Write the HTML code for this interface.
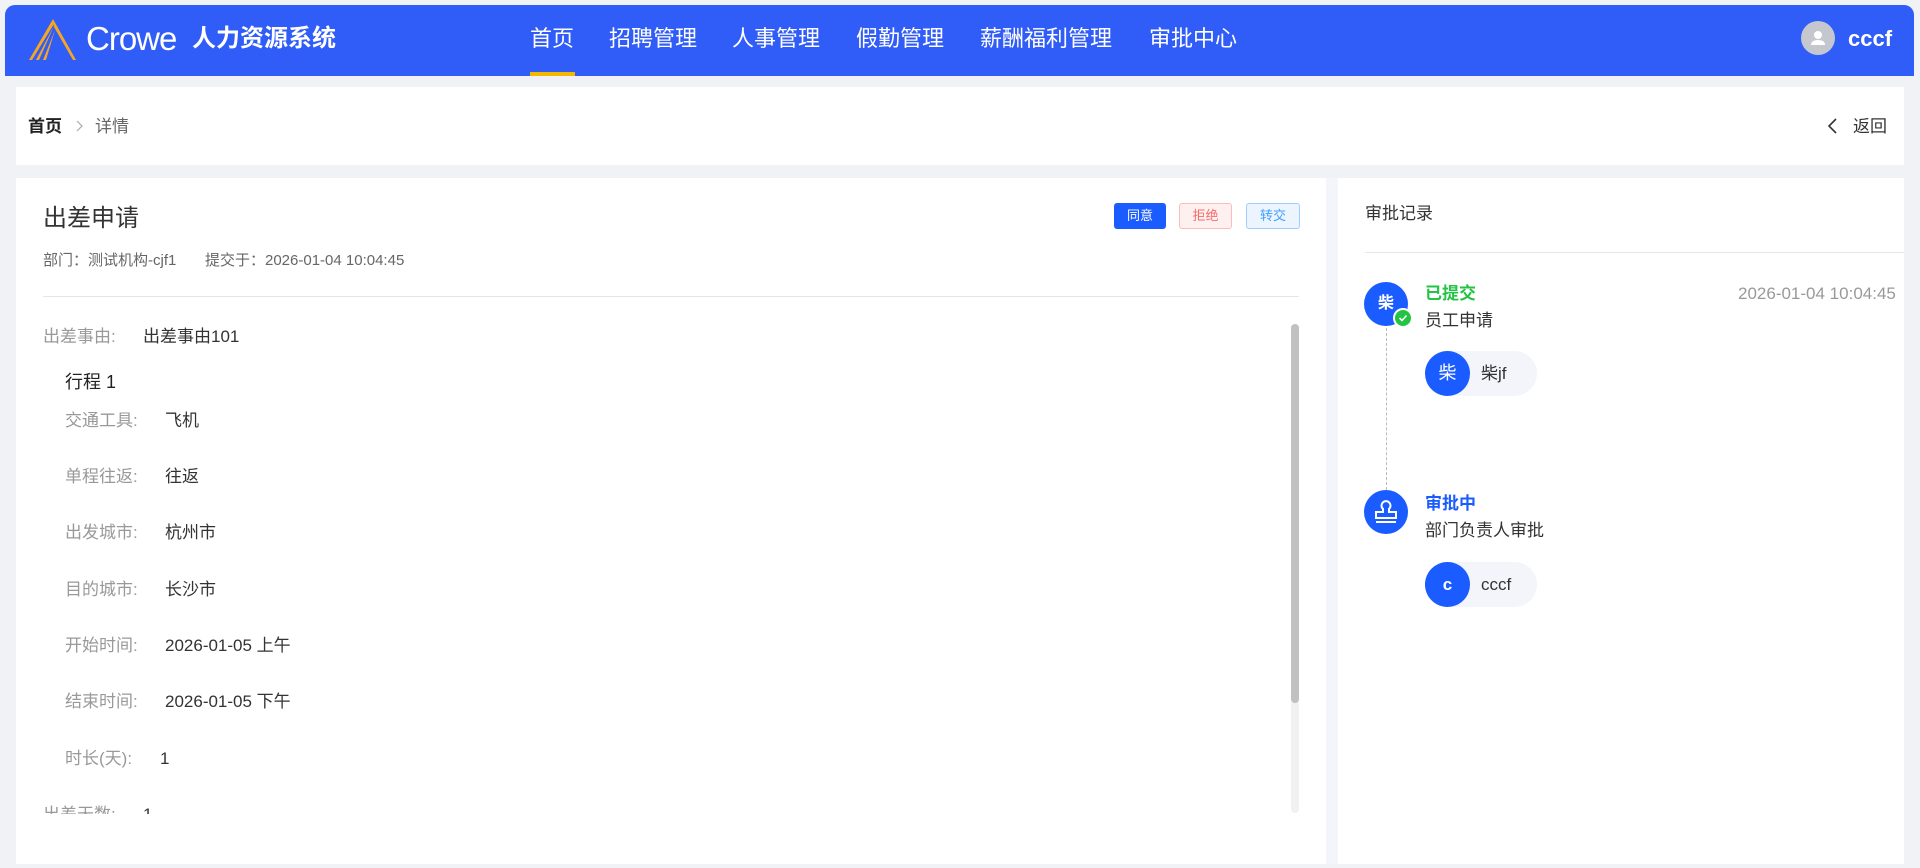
<!DOCTYPE html>
<html><head><meta charset="utf-8"><style>
*{box-sizing:border-box;margin:0;padding:0}
body{width:1920px;height:868px;overflow:hidden;background:#f0f2f5;font-family:"Liberation Sans","Noto Sans CJK SC",sans-serif;color:#333;position:relative}
.a{position:absolute;white-space:nowrap}
.hdr{left:5px;top:5px;width:1909px;height:71px;background:#305cf7;border-radius:10px 10px 0 0}
.nav{color:#fff;font-size:22px;top:23px;line-height:32px}
.card{background:#fff}
.lbl{color:#999;font-size:17px;line-height:20px}
.val{color:#333;font-size:17px;line-height:20px}
.btn{height:26px;font-size:13px;line-height:24px;text-align:center;border-radius:3px;border:1px solid}
.circ{border-radius:50%;background:#1a5cff;color:#fff;text-align:center}
.chip{height:45px;border-radius:23px;background:#f3f5fa}
</style></head><body>
<div class="a hdr"></div>
<svg class="a" style="left:27px;top:17px" width="50" height="46" viewBox="0 0 50 46">
<path d="M26 2 L49 43 L46 43 L27 10 Z" fill="#f5a623"/>
<path d="M26 2 L27 7 L5 43 L2 43 Z" fill="#f5a623"/>
<path d="M27 9 L12 43 L9 43 Z" fill="#f5a623"/>
<path d="M28 13 L19 43 L16 43 Z" fill="#f5a623"/>
</svg>
<div class="a" style="left:86px;top:19px;color:#fff;font-size:33px;line-height:40px;letter-spacing:-1px">Crowe</div>
<div class="a" style="left:192px;top:23px;color:#fff;font-size:24px;font-weight:bold;line-height:32px">人力资源系统</div>
<div class="a nav" style="left:530px">首页</div>
<div class="a" style="left:530px;top:72px;width:45px;height:4px;background:#f5b800"></div>
<div class="a nav" style="left:609px">招聘管理</div>
<div class="a nav" style="left:732px">人事管理</div>
<div class="a nav" style="left:856px">假勤管理</div>
<div class="a nav" style="left:980px">薪酬福利管理</div>
<div class="a nav" style="left:1149px">审批中心</div>
<div class="a" style="left:1801px;top:21px;width:34px;height:34px;border-radius:50%;background:#c4c7ce"></div>
<svg class="a" style="left:1808px;top:28px" width="20" height="20" viewBox="0 0 20 20"><circle cx="10" cy="7" r="4" fill="#fff"/><path d="M3 17 Q3 12 10 12 Q17 12 17 17 Z" fill="#fff"/></svg>
<div class="a" style="left:1848px;top:25px;color:#fff;font-size:22px;font-weight:bold;line-height:28px">cccf</div>

<div class="a card" style="left:16px;top:87px;width:1888px;height:78px"></div>
<div class="a" style="left:28px;top:117px;font-size:17px;font-weight:bold;color:#222;line-height:20px">首页</div>
<svg class="a" style="left:74px;top:119px" width="10" height="14"><path d="M3 2 L8 7 L3 12" stroke="#aaa" fill="none" stroke-width="1.2"/></svg>
<div class="a" style="left:95px;top:117px;font-size:17px;color:#666;line-height:20px">详情</div>
<svg class="a" style="left:1826px;top:117px" width="12" height="18"><path d="M10 2 L3 9 L10 16" stroke="#333" fill="none" stroke-width="1.6"/></svg>
<div class="a" style="left:1853px;top:117px;font-size:17px;color:#333;line-height:20px">返回</div>

<div class="a card" style="left:16px;top:178px;width:1310px;height:686px"></div>
<div class="a" style="left:1326px;top:178px;width:12px;height:686px;background:#f3f5fa"></div>
<div class="a card" style="left:1338px;top:178px;width:566px;height:686px"></div>

<div class="a" style="left:43px;top:204px;font-size:24px;color:#333;line-height:30px">出差申请</div>
<div class="a" style="left:43px;top:252px;font-size:15px;color:#666;line-height:18px">部门：测试机构-cjf1</div>
<div class="a" style="left:205px;top:252px;font-size:15px;color:#666;line-height:18px">提交于：2026-01-04 10:04:45</div>
<div class="a btn" style="left:1114px;top:203px;width:52px;background:#1a5cff;border-color:#1a5cff;color:#fff">同意</div>
<div class="a btn" style="left:1179px;top:203px;width:53px;background:#fff0f0;border-color:#fbb;color:#f56c6c">拒绝</div>
<div class="a btn" style="left:1246px;top:203px;width:54px;background:#ecf5ff;border-color:#a0cfff;color:#409eff">转交</div>
<div class="a" style="left:43px;top:296px;width:1256px;height:1px;background:#e4e6ea"></div>

<div class="a" style="left:16px;top:310px;width:1290px;height:504px;overflow:hidden">
<div class="a lbl" style="left:27px;top:17px">出差事由:</div><div class="a val" style="left:127px;top:17px">出差事由101</div>
<div class="a" style="left:49px;top:61px;font-size:18px;color:#222;line-height:22px">行程 1</div>
<div class="a lbl" style="left:49px;top:101px">交通工具:</div><div class="a val" style="left:149px;top:101px">飞机</div>
<div class="a lbl" style="left:49px;top:157px">单程往返:</div><div class="a val" style="left:149px;top:157px">往返</div>
<div class="a lbl" style="left:49px;top:213px">出发城市:</div><div class="a val" style="left:149px;top:213px">杭州市</div>
<div class="a lbl" style="left:49px;top:270px">目的城市:</div><div class="a val" style="left:149px;top:270px">长沙市</div>
<div class="a lbl" style="left:49px;top:326px">开始时间:</div><div class="a val" style="left:149px;top:326px">2026-01-05 上午</div>
<div class="a lbl" style="left:49px;top:382px">结束时间:</div><div class="a val" style="left:149px;top:382px">2026-01-05 下午</div>
<div class="a lbl" style="left:49px;top:439px">时长(天):</div><div class="a val" style="left:144px;top:439px">1</div>
<div class="a lbl" style="left:27px;top:495px">出差天数:</div><div class="a val" style="left:127px;top:495px">1</div>
</div>
<div class="a" style="left:1291px;top:324px;width:8px;height:489px;background:#f1f1f1;border-radius:4px"></div>
<div class="a" style="left:1291px;top:324px;width:8px;height:379px;background:#c1c1c1;border-radius:4px"></div>

<div class="a" style="left:1365px;top:204px;font-size:17px;color:#333;line-height:20px">审批记录</div>
<div class="a" style="left:1365px;top:252px;width:539px;height:1px;background:#e4e6ea"></div>

<div class="a" style="left:1386px;top:328px;height:162px;border-left:1px dashed #bbb"></div>
<div class="a circ" style="left:1364px;top:282px;width:44px;height:44px;font-size:16px;font-weight:bold;line-height:44px">柴</div>
<div class="a" style="left:1393px;top:308px;width:20px;height:20px;border-radius:50%;background:#23c343;border:2px solid #fff"></div>
<svg class="a" style="left:1397px;top:312px" width="12" height="12"><path d="M2.5 6 L5 8.5 L9.5 3.5" stroke="#fff" fill="none" stroke-width="1.6"/></svg>
<div class="a" style="left:1425px;top:284px;font-size:17px;font-weight:bold;color:#23c343;line-height:20px">已提交</div>
<div class="a" style="left:1738px;top:284px;font-size:17px;color:#999;line-height:20px;width:166px;overflow:hidden">2026-01-04 10:04:45</div>
<div class="a" style="left:1425px;top:311px;font-size:17px;color:#333;line-height:20px">员工申请</div>
<div class="a chip" style="left:1425px;top:351px;width:112px"></div>
<div class="a circ" style="left:1425px;top:351px;width:45px;height:45px;font-size:18px;line-height:45px">柴</div>
<div class="a" style="left:1481px;top:364px;font-size:17px;color:#333;line-height:20px">柴jf</div>

<div class="a circ" style="left:1364px;top:490px;width:44px;height:44px"></div>
<svg class="a" style="left:1364px;top:490px" width="44" height="44" viewBox="0 0 44 44" fill="none" stroke="#fff" stroke-width="2"><path d="M19 22 L19 19 A4.5 4.5 0 1 1 25 19 L25 22 L32 22 L32 28 L12 28 L12 22 Z"/><path d="M12 32 L32 32"/></svg>
<div class="a" style="left:1425px;top:494px;font-size:17px;font-weight:bold;color:#1a5cff;line-height:20px">审批中</div>
<div class="a" style="left:1425px;top:521px;font-size:17px;color:#333;line-height:20px">部门负责人审批</div>
<div class="a chip" style="left:1425px;top:562px;width:112px"></div>
<div class="a circ" style="left:1425px;top:562px;width:45px;height:45px;font-size:17px;font-weight:bold;line-height:45px">c</div>
<div class="a" style="left:1481px;top:575px;font-size:17px;color:#333;line-height:20px">cccf</div>
</body></html>
